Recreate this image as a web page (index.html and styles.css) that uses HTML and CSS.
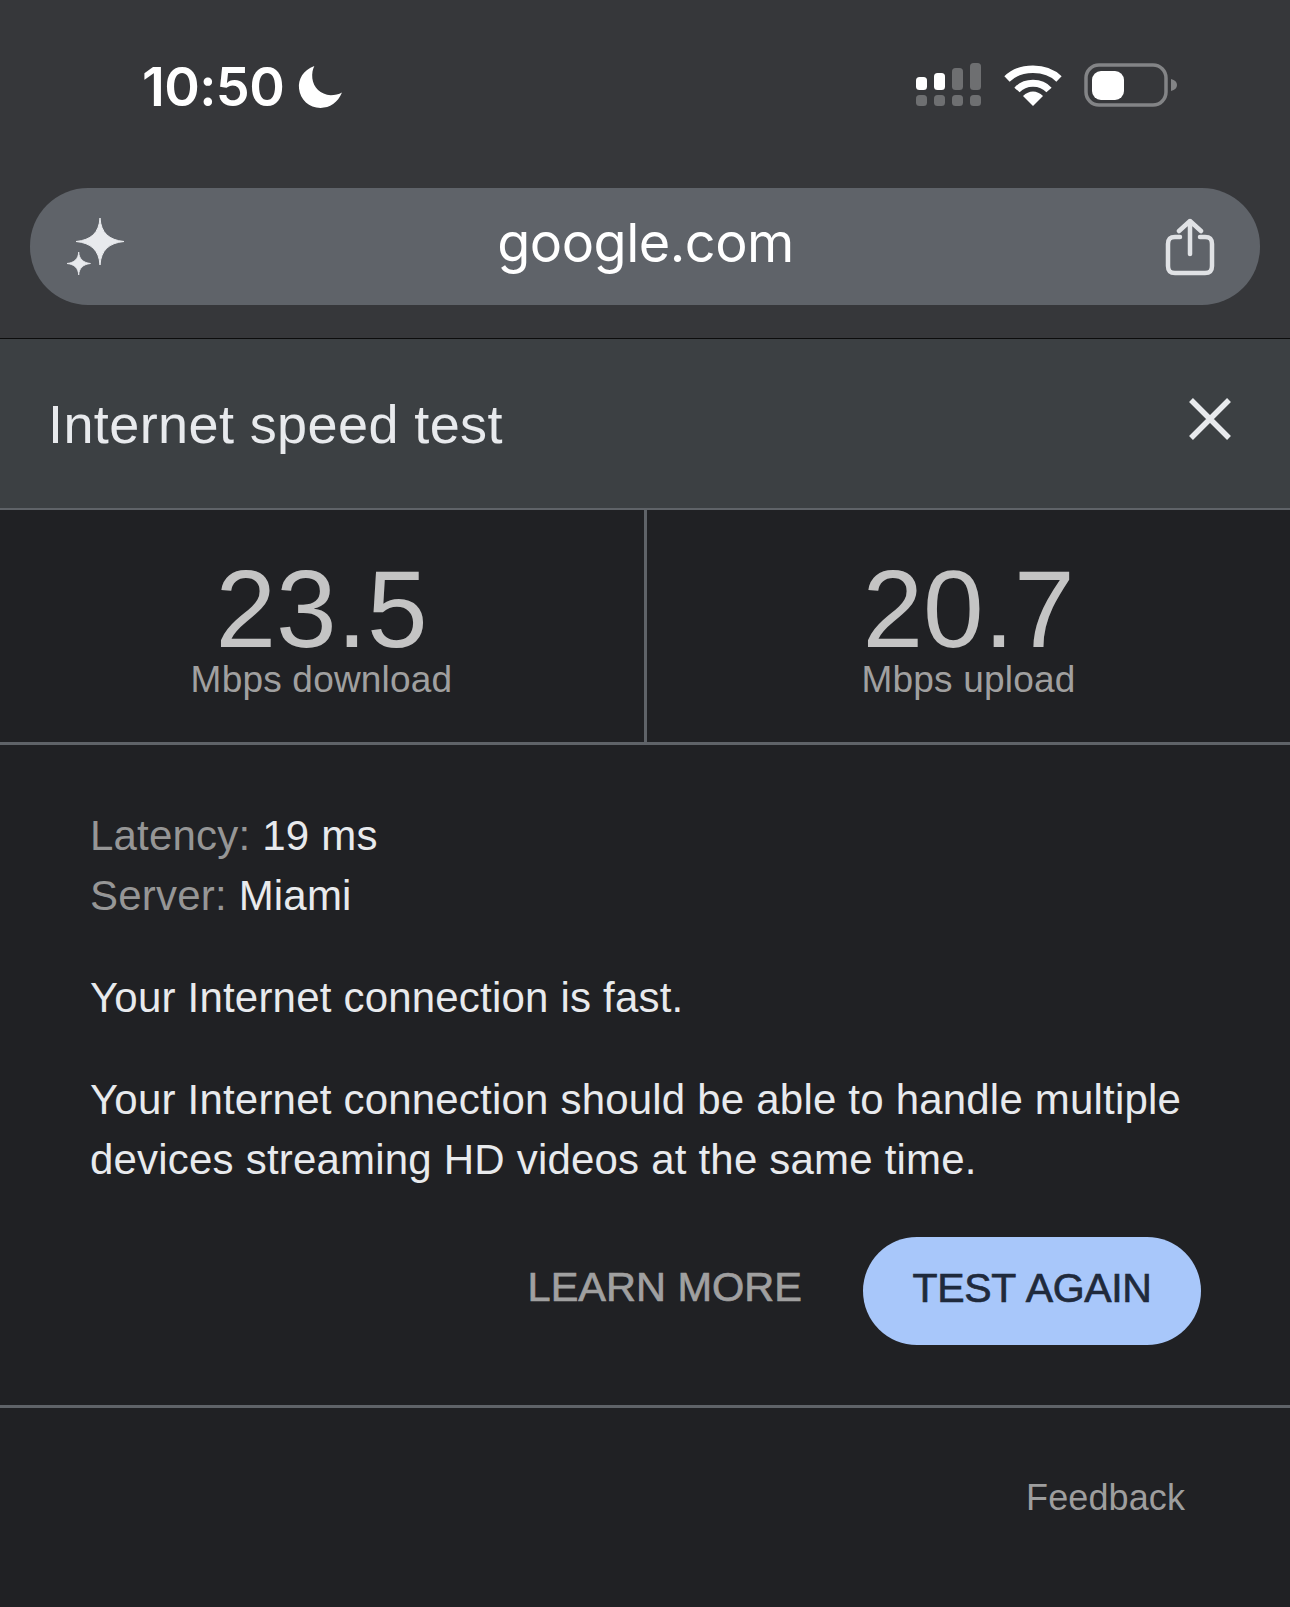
FILE: index.html
```html
<!DOCTYPE html>
<html lang="en">
  <head>
    <meta charset="UTF-8" />
    <meta name="viewport" content="width=device-width, initial-scale=1.0" />
    <title>Internet speed test</title>
    <link rel="stylesheet" href="styles.css">
  </head>
  <body>
    <div class="browser-top">
      <div class="status-bar">
        <div class="status-time">
          <span>10:50</span>
          <svg class="moon" viewBox="0 0 44 44" width="45" height="45">
            <path d="M16 1 C5 5 0 14 1 23 C2 34 11 42 22 42 C31 42 39 37 43 27 C40 29 36 29.500 32 29.500 C22 29 15 22 14 13 C13.500 8 14.500 4 16 1 Z" fill="#fff" />
          </svg>
        </div>
        <div class="status-icons">
          <svg viewBox="0 0 66 44" width="66" height="44">
            <rect x="0" y="14" width="11" height="13" rx="3.500" fill="#fff" />
            <rect x="18" y="10" width="11" height="17" rx="3.500" fill="#fff" />
            <rect x="36" y="5" width="11" height="22" rx="3.500" fill="#6e6f71" />
            <rect x="54" y="0" width="11" height="27" rx="3.500" fill="#6e6f71" />
            <rect x="0" y="32" width="11" height="11" rx="3.500" fill="#6e6f71" />
            <rect x="18" y="32" width="11" height="11" rx="3.500" fill="#6e6f71" />
            <rect x="36" y="32" width="11" height="11" rx="3.500" fill="#6e6f71" />
            <rect x="54" y="32" width="11" height="11" rx="3.500" fill="#6e6f71" />
          </svg>
          <svg class="wifi" viewBox="0 0 58 44" width="58" height="44">
            <path d="M29 43 L19 33 C25 27 33 27 39 33 Z" fill="#fff" />
            <path d="M13 27 C21 18 37 18 45 27" fill="none" stroke="#fff" stroke-width="7" />
            <path d="M3 16 C16 3 42 3 55 16" fill="none" stroke="#fff" stroke-width="7.500" />
          </svg>
          <svg viewBox="0 0 94 44" width="94" height="44">
            <rect x="2" y="2" width="80" height="40" rx="13" fill="none" stroke="#838486" stroke-width="3.500" />
            <rect x="8" y="8" width="32" height="29" rx="9" fill="#fff" />
            <path d="M87 16 C91 17 93 19 93 22 C93 25 91 27 87 28 Z" fill="#838486" />
          </svg>
        </div>
      </div>
      <div class="url-bar">
        <svg class="sparkle" viewBox="0 0 60 60" width="60" height="60">
          <path d="M34 1 C35 16 43 23 58 24.500 C43 26 35 33 34 48 C33 33 25 26 10 24.500 C25 23 33 16 34 1 Z" fill="#e8eaed" stroke="#e8eaed" stroke-width="1" stroke-linejoin="round" />
          <path d="M12.700 35 C13.200 42 17 45.500 24.500 46.500 C17 47.500 13.200 51 12.700 58 C12.200 51 8.500 47.500 1 46.500 C8.500 45.500 12.200 42 12.700 35 Z" fill="#e8eaed" stroke="#e8eaed" stroke-width="0.800" stroke-linejoin="round" />
        </svg>
        <span class="url-text">google.com</span>
        <svg class="share" viewBox="0 0 50 58" width="50" height="58">
          <path d="M15 19 H10 C5 19 3 21 3 26 V48 C3 53 5 55 10 55 H40 C45 55 47 53 47 48 V26 C47 21 45 19 40 19 H35" fill="none" stroke="#e0e2e5" stroke-width="4.500" stroke-linecap="round" />
          <path d="M25 36 V3 M14 13 L25 3 L36 13" fill="none" stroke="#e0e2e5" stroke-width="4.500" stroke-linecap="round" stroke-linejoin="round" />
        </svg>
      </div>
    </div>

    <div class="panel-head">
      <h2>Internet speed test</h2>
      <svg class="close" viewBox="0 0 42 42" width="42" height="42">
        <path d="M2 2 L40 40 M40 2 L2 40" stroke="#e8eaed" stroke-width="5.500" />
      </svg>
    </div>

    <div class="metrics">
      <div class="metric">
        <div class="metric-num">23.5</div>
        <div class="metric-label">Mbps download</div>
      </div>
      <div class="metric">
        <div class="metric-num">20.7</div>
        <div class="metric-label">Mbps upload</div>
      </div>
    </div>

    <div class="details">
      <p class="stat"><span class="muted">Latency:</span> 19 ms</p>
      <p class="stat"><span class="muted">Server:</span> Miami</p>
      <p class="verdict">Your Internet connection is fast.</p>
      <p class="summary">Your Internet connection should be able to handle multiple devices streaming HD videos at the same time.</p>
      <div class="actions">
        <a class="learn-more">LEARN MORE</a>
        <button class="test-again" type="button">TEST AGAIN</button>
      </div>
    </div>

    <div class="footer">
      <a class="feedback">Feedback</a>
    </div>
  </body>
</html>
```

FILE: styles.css
```css
body {
  font-family: "Liberation Sans", Arial, sans-serif;
  background-color: #202124;
  margin: 0;
  padding: 0;
  color: #e8eaed;
  height: 1607px;
  overflow: hidden;
}

.browser-top {
  background-color: #36373a;
  height: 338px;
  border-bottom: 1px solid #0c0c0c;
  padding: 0 30px;
}

.status-bar {
  height: 188px;
  display: flex;
  justify-content: space-between;
  align-items: flex-start;
  padding: 62px 82px 0 112px;
  box-sizing: border-box;
}

.status-time {
  display: flex;
  align-items: center;
  gap: 14px;
  font-family: Inter, sans-serif;
  font-size: 54px;
  font-weight: 600;
  line-height: 50px;
  color: #fff;
  letter-spacing: -0.6px;
}

.status-icons {
  display: flex;
  gap: 22px;
  align-items: center;
  padding-top: 1px;
}

.url-bar {
  height: 117px;
  background-color: #5f6369;
  border-radius: 58px;
  display: flex;
  align-items: center;
  justify-content: space-between;
  padding: 0 45px 0 36px;
}

.url-text {
  font-family: Inter, sans-serif;
  font-size: 54px;
  line-height: 60px;
  color: #fff;
  letter-spacing: -0.5px;
  padding-bottom: 8px;
}

.panel-head {
  background-color: #3c4043;
  height: 171px;
  border-bottom: 2px solid #5f6368;
  display: flex;
  align-items: center;
  justify-content: space-between;
  padding: 0 59px 10px 48px;
  box-sizing: border-box;
}

.panel-head h2 {
  font-size: 54px;
  font-weight: 400;
  letter-spacing: 0.4px;
  margin: 10px 0 0;
  color: #e8eaed;
}

.metrics {
  display: grid;
  grid-template-columns: 647px 1fr;
  height: 235px;
  border-bottom: 3px solid #5f6368;
  box-sizing: border-box;
}

.metric {
  text-align: center;
  padding-top: 49px;
}

.metric:first-child {
  border-right: 3px solid #5f6368;
  padding-right: 1px;
}

.metric-num {
  font-size: 109px;
  line-height: 100px;
  color: #c4c4c4;
}

.metric-label {
  font-size: 37px;
  line-height: 42px;
  letter-spacing: 0.2px;
  color: #a0a0a0;
}

.details {
  padding: 61px 90px 0;
  height: 663px;
  box-sizing: border-box;
  border-bottom: 3px solid #5f6368;
}

.details p {
  margin: 0;
  font-size: 42px;
  line-height: 60px;
  letter-spacing: 0.2px;
  color: #e8eaed;
}

.muted {
  color: #969696;
}

.details .verdict {
  margin-top: 42px;
}

.details .summary {
  margin-top: 42px;
}

.actions {
  display: flex;
  justify-content: flex-end;
  align-items: center;
  gap: 61px;
  margin-top: 47px;
  margin-right: -1px;
}

.learn-more {
  font-size: 41.500px;
  color: #a0a0a0;
  -webkit-text-stroke: 0.700px #a0a0a0;
  padding-bottom: 8px;
}

.test-again {
  width: 338px;
  height: 108px;
  border: none;
  border-radius: 54px;
  background-color: #a8c7fa;
  color: #1f2a3c;
  font-family: "Liberation Sans", Arial, sans-serif;
  font-size: 41px;
  letter-spacing: -0.400px;
  word-spacing: 2px;
  -webkit-text-stroke: 0.700px #1f2a3c;
  padding-bottom: 6px;
}

.footer {
  display: flex;
  justify-content: flex-end;
  padding: 69px 105px 0 0;
}

.feedback {
  font-size: 36px;
  letter-spacing: 0.1px;
  color: #9e9e9e;
}
```
